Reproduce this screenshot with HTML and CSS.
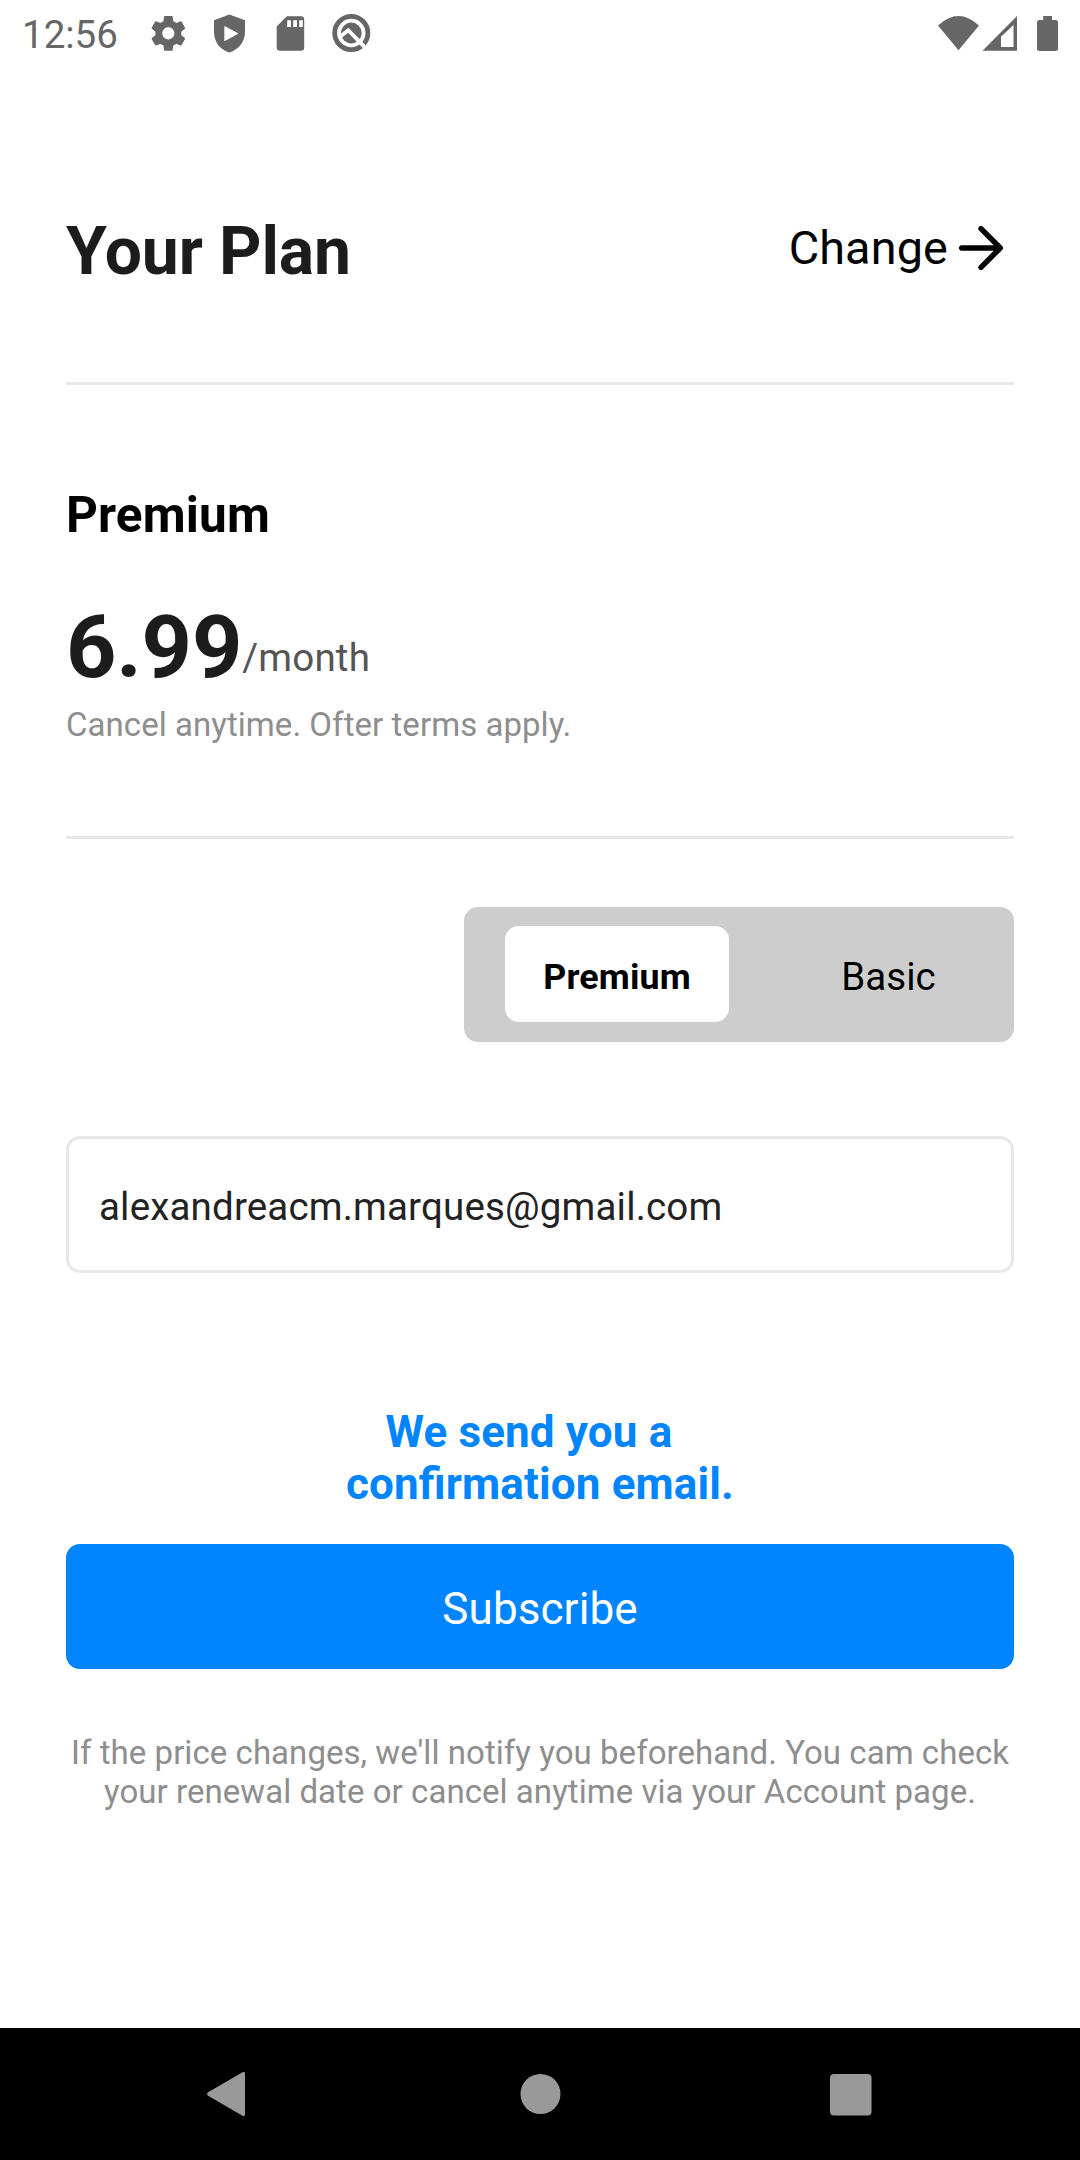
FILE: index.html
```html
<!DOCTYPE html>
<html lang="en">
<head>
<meta charset="utf-8">
<title>Your Plan</title>
<link rel="stylesheet" href="styles.css">
</head>
<body>
<div class="screen">
  <div class="status">
    <span class="clock">12:56</span>
    <div class="status-icons">
      <svg class="status-icon" viewBox="0 0 44 44"><g transform="translate(1.6 1.6) scale(1.73)"><path fill-rule="evenodd" d="M19.43 12.98c.04-.32.07-.64.07-.98s-.03-.66-.07-.98l2.11-1.65c.19-.15.24-.42.12-.64l-2-3.46c-.12-.22-.39-.3-.61-.22l-2.49 1c-.52-.4-1.08-.73-1.69-.98l-.38-2.65C14.46 2.18 14.25 2 14 2h-4c-.25 0-.46.18-.49.42l-.38 2.65c-.61.25-1.17.59-1.69.98l-2.49-1c-.23-.09-.49 0-.61.22l-2 3.46c-.13.22-.07.49.12.64l2.11 1.65c-.04.32-.07.65-.07.98s.03.66.07.98l-2.11 1.65c-.19.15-.24.42-.12.64l2 3.46c.12.22.39.3.61.22l2.49-1c.52.4 1.08.73 1.69.98l.38 2.65c.03.24.24.42.49.42h4c.25 0 .46-.18.49-.42l.38-2.65c.61-.25 1.17-.59 1.69-.98l2.49 1c.23.09.49 0 .61-.22l2-3.46c.12-.22.07-.49-.12-.64l-2.11-1.65zM12 15.5c-1.93 0-3.5-1.57-3.5-3.5s1.57-3.5 3.5-3.5 3.5 1.57 3.5 3.5-1.57 3.5-3.5 3.5z"/></g></svg>
      <svg class="status-icon" viewBox="0 0 44 44"><path fill-rule="evenodd" d="M22.3 3.5 38 9.3V21C38 30.500 32 38.500 22.300 41.500C12.500 38.500 7 30.500 7 21V9.300ZM17.300 15.500V29.800Q17.300 30.300 18 30L30.700 23Q31.300 22.500 30.700 22L18 15.200Q17.300 15 17.300 15.500Z"/></svg>
      <svg class="status-icon" viewBox="0 0 44 44"><path fill-rule="evenodd" d="M18.800 5H33Q36.200 5 36.200 8.200V36.200Q36.200 39.400 33 39.400H12Q8.700 39.400 8.700 36.200V15.200ZM19.200 9V15.800H23V9ZM25.200 9V15.800H29V9ZM31.200 9V15.800H34.800V9Z" transform="translate(0 .3)"/></svg>
      <svg class="status-icon" viewBox="0 0 44 44"><circle class="ring" cx="22.300" cy="22" r="16.600"/><circle cx="22.300" cy="22" r="10.400"/><path class="tail" d="M11 25.800 19.200 19.200 35.500 35.800"/></svg>
    </div>
    <svg class="status-system" viewBox="0 0 120 40"><path d="M0 14.500Q20.500-4.500 41 14.500L20.500 39.300Z"/><path fill-rule="evenodd" d="M44.500 39.700H79V5ZM63 36V25.800L75.500 14V36Z"/><path d="M105.200 5H114V9H117.500Q120 9 120 11.500V37.500Q120 40 117.500 40H101.500Q99 40 99 37.500V11.500Q99 9 101.500 9H105.200Z"/></svg>
  </div>

  <main class="content">
    <header class="header">
      <h1 class="title">Your Plan</h1>
      <a class="change">Change
        <svg class="arrow" viewBox="0 0 44 44"><path d="M2.700 22H41M22 2.700 41.300 22 22 41.300"/></svg>
      </a>
    </header>

    <section class="plan">
      <h2 class="plan-name">Premium</h2>
      <div class="price"><span class="amount">6.99</span><span class="period">/month</span></div>
      <p class="terms">Cancel anytime. Ofter terms apply.</p>
    </section>

    <div class="switch">
      <div class="option selected">Premium</div>
      <div class="option">Basic</div>
    </div>

    <div class="email">alexandreacm.marques@gmail.com</div>

    <p class="confirm">We send you a&nbsp;&nbsp;<br>con<span class="ligature">fi</span>rmation email.</p>
    <div class="subscribe">Subscribe</div>
    <p class="note">If the price changes, we'll notify you beforehand. You cam check<br>your renewal date or cancel anytime via your Account page.</p>
  </main>

  <nav class="navbar">
    <svg class="nav-icon" viewBox="0 0 48 48"><path d="M7.500 22 41.500 2.300Q44 .800 44 4V44Q44 47.200 41.500 45.700L7.500 26Q4.500 24 7.500 22Z"/></svg>
    <svg class="nav-icon" viewBox="0 0 48 48"><circle cx="26.500" cy="24" r="20"/></svg>
    <svg class="nav-icon" viewBox="0 0 48 48"><rect x="4" y="4" width="41.500" height="41.500" rx="4"/></svg>
  </nav>
</div>
</body>
</html>
```
FILE: styles.css
```css
* {
  box-sizing: border-box;
}

body {
  margin: 0;
  background: #fff;
  font-family: Roboto, "Liberation Sans", sans-serif;
  color: #000;
}

h1, h2, p {
  margin: 0;
}

.screen {
  display: flex;
  flex-direction: column;
  width: 1080px;
  height: 2160px;
  background: #fff;
}

/* Status bar */
.status {
  display: flex;
  align-items: center;
  height: 66px;
  padding: 0 22px;
  fill: #666;
  color: #666;
}

.clock {
  width: 124px;
  font-size: 38.5px;
  line-height: 46px;
  padding-top: 3px;
}

.status-icons {
  display: flex;
  gap: 17px;
  margin-top: -22px;
  padding-top: 22px;
}

.status-icon {
  width: 44px;
  height: 44px;
}

.ring {
  fill: none;
  stroke: #666;
  stroke-width: 4.8;
}

.tail {
  fill: none;
  stroke: #fff;
  stroke-width: 3.8;
}

.status-system {
  width: 120px;
  height: 40px;
  margin: 0 0 4px auto;
}

/* Page content */
.content {
  flex: 1;
  padding: 0 66px;
}

.header {
  display: flex;
  justify-content: space-between;
  align-items: flex-start;
  height: 319px;
  padding: 147px 11px 0 0;
  border-bottom: 3px solid #e8e8e8;
}

.title {
  font-size: 66px;
  line-height: 78px;
  font-weight: 700;
  letter-spacing: -0.1px;
  color: #1c1c1c;
}

.change {
  display: flex;
  align-items: center;
  gap: 11px;
  margin-top: 7px;
  font-size: 46.75px;
  line-height: 56px;
  letter-spacing: 0.15px;
}

.arrow {
  width: 44px;
  height: 44px;
  fill: none;
  stroke: #000;
  stroke-width: 5.4;
  stroke-linecap: round;
  stroke-linejoin: round;
}

.plan {
  padding: 101px 0 92px;
  border-bottom: 3px solid #e8e8e8;
}

.plan-name {
  font-size: 49.5px;
  line-height: 58px;
  font-weight: 700;
  letter-spacing: 0.15px;
}

.price {
  display: flex;
  align-items: flex-end;
  margin-top: 51px;
}

.amount {
  font-size: 88px;
  line-height: 104px;
  font-weight: 700;
  letter-spacing: -0.2px;
  color: #1c1c1c;
}

.period {
  margin-bottom: 19px;
  font-size: 38.5px;
  line-height: 45px;
  letter-spacing: 0.2px;
  color: #555;
}

.terms {
  margin-top: 6px;
  font-size: 33px;
  line-height: 39px;
  letter-spacing: 0.05px;
  color: #8e8e8e;
}

.switch {
  display: flex;
  gap: 48px;
  width: 550px;
  height: 135px;
  margin: 68px 0 0 auto;
  padding: 19px 0 20px 41px;
  border-radius: 14px;
  background: #cdcdcd;
}

.option {
  display: flex;
  align-items: center;
  justify-content: center;
  width: 223px;
  padding-top: 4px;
  border-radius: 14px;
  font-size: 38.5px;
}

.selected {
  width: 224px;
  padding-top: 6px;
  background: #fff;
  font-size: 35.75px;
  font-weight: 700;
  letter-spacing: 0.15px;
}

.email {
  display: flex;
  align-items: center;
  height: 137px;
  margin-top: 94px;
  padding: 4px 30px 0;
  border: 3px solid #e8e8e8;
  border-radius: 14px;
  font-size: 38.5px;
  letter-spacing: 0.17px;
  color: #222;
}

.confirm {
  margin-top: 133px;
  font-size: 44px;
  line-height: 52px;
  font-weight: 700;
  letter-spacing: 0.15px;
  text-align: center;
  color: #0085ff;
}

/* Spacing of zero keeps the fi ligature */
.ligature {
  letter-spacing: 0;
}

.subscribe {
  display: flex;
  align-items: center;
  justify-content: center;
  height: 125px;
  margin-top: 34px;
  padding-top: 4px;
  border-radius: 14px;
  background: #0085ff;
  font-size: 44px;
  letter-spacing: 0.1px;
  color: #fff;
}

.note {
  margin-top: 64px;
  font-size: 33px;
  line-height: 39px;
  letter-spacing: 0.05px;
  text-align: center;
  color: #8e8e8e;
}

/* System navigation */
.navbar {
  display: flex;
  justify-content: space-between;
  align-items: center;
  height: 132px;
  padding: 0 206px 0 201px;
  background: #000;
}

.nav-icon {
  width: 48px;
  height: 48px;
  fill: #999;
}
```
